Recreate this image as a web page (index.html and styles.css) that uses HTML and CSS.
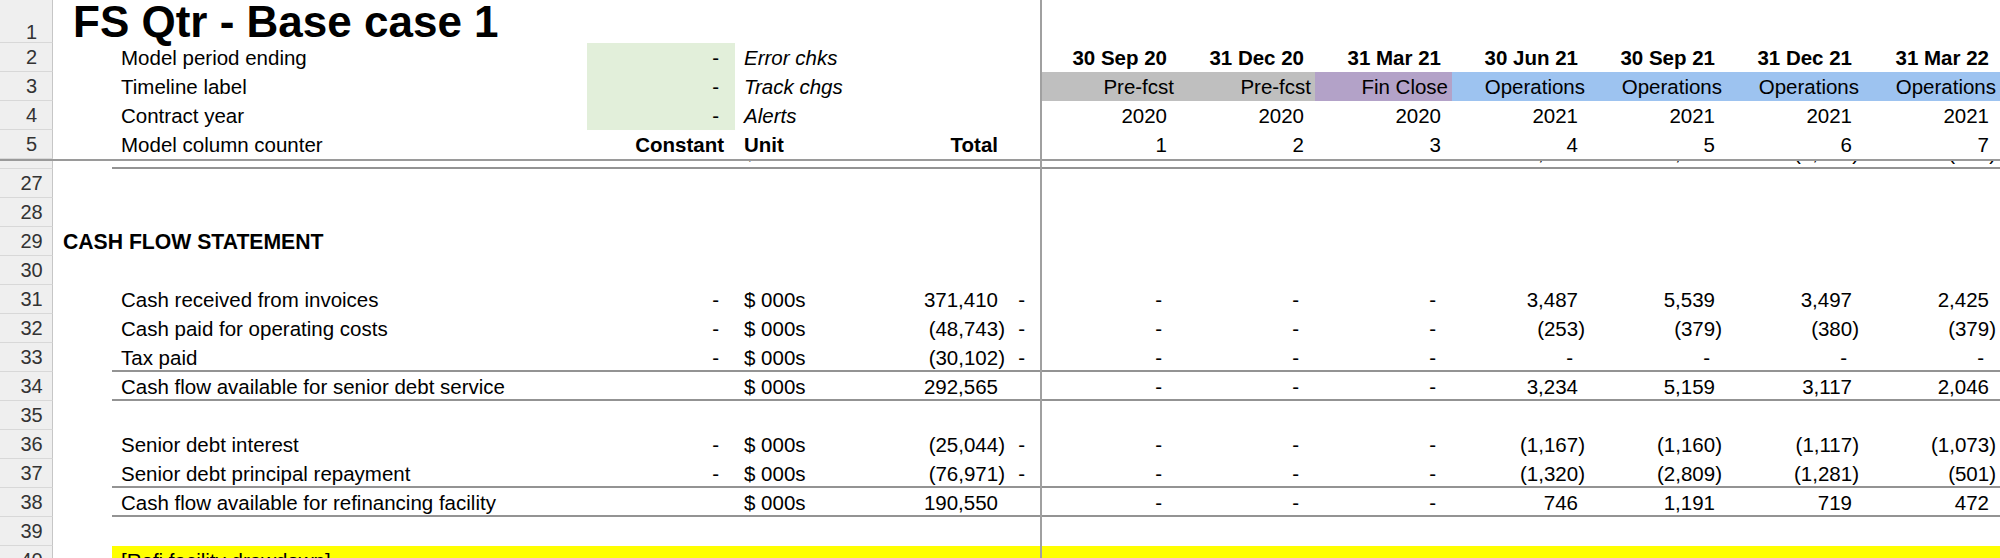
FILE: index.html
```html
<!DOCTYPE html>
<html>
<head>
<meta charset="utf-8">
<title>FS Qtr - Base case 1</title>
<link rel="stylesheet" href="styles.css">
</head>
<body>
<div class="sheet">
  <div class="pane-top">
    <div class="row row-title">
      <div class="rh rh-title">1</div>
      <div class="ind"><span class="title">FS Qtr - Base case 1</span></div>
      <div class="body"></div>
    </div>
    <div class="row">
      <div class="rh">2</div><div class="ind"></div>
      <div class="body">
        <div class="lbl">Model period ending</div>
        <div class="c dash green">-</div>
        <div class="unit it">Error chks</div>
        <div class="c"></div><div class="c"></div>
        <div class="c num b">30 Sep 20</div>
        <div class="c num b">31 Dec 20</div>
        <div class="c num b">31 Mar 21</div>
        <div class="c num b">30 Jun 21</div>
        <div class="c num b">30 Sep 21</div>
        <div class="c num b">31 Dec 21</div>
        <div class="c num b">31 Mar 22</div>
      </div>
    </div>
    <div class="row">
      <div class="rh">3</div><div class="ind"></div>
      <div class="body">
        <div class="lbl">Timeline label</div>
        <div class="c dash green">-</div>
        <div class="unit it">Track chgs</div>
        <div class="c"></div><div class="c"></div>
        <div class="c txt pre">Pre-fcst</div>
        <div class="c txt pre">Pre-fcst</div>
        <div class="c txt fin">Fin Close</div>
        <div class="c txt ops">Operations</div>
        <div class="c txt ops">Operations</div>
        <div class="c txt ops">Operations</div>
        <div class="c txt ops">Operations</div>
      </div>
    </div>
    <div class="row">
      <div class="rh">4</div><div class="ind"></div>
      <div class="body">
        <div class="lbl">Contract year</div>
        <div class="c dash green">-</div>
        <div class="unit it">Alerts</div>
        <div class="c"></div><div class="c"></div>
        <div class="c num">2020</div>
        <div class="c num">2020</div>
        <div class="c num">2020</div>
        <div class="c num">2021</div>
        <div class="c num">2021</div>
        <div class="c num">2021</div>
        <div class="c num">2021</div>
      </div>
    </div>
    <div class="row">
      <div class="rh">5</div><div class="ind"></div>
      <div class="body">
        <div class="lbl">Model column counter</div>
        <div class="c num b">Constant</div>
        <div class="unit b">Unit</div>
        <div class="c num b">Total</div>
        <div class="c"></div>
        <div class="c num">1</div>
        <div class="c num">2</div>
        <div class="c num">3</div>
        <div class="c num">4</div>
        <div class="c num">5</div>
        <div class="c num">6</div>
        <div class="c num">7</div>
      </div>
    </div>
  </div>

  <div class="pane-bottom">
    <div class="clip">
      <div class="row rule">
        <div class="rh">26</div><div class="ind"></div>
        <div class="body">
          <div class="lbl"></div>
          <div class="c"></div>
          <div class="unit">$ 000s</div>
          <div class="c"></div><div class="c"></div>
          <div class="c"></div><div class="c"></div><div class="c"></div>
          <div class="c num">3,452</div>
          <div class="c num">5,018</div>
          <div class="c neg">(1,236)</div>
          <div class="c neg">(458)</div>
        </div>
      </div>
    </div>

    <div class="row"><div class="rh">27</div><div class="ind"></div><div class="body"></div></div>
    <div class="row"><div class="rh">28</div><div class="ind"></div><div class="body"></div></div>
    <div class="row">
      <div class="rh">29</div>
      <div class="ind"><span class="section">CASH FLOW STATEMENT</span></div>
      <div class="body"></div>
    </div>
    <div class="row"><div class="rh">30</div><div class="ind"></div><div class="body"></div></div>

    <div class="row">
      <div class="rh">31</div><div class="ind"></div>
      <div class="body">
        <div class="lbl">Cash received from invoices</div>
        <div class="c dash">-</div>
        <div class="unit">$ 000s</div>
        <div class="c num">371,410</div>
        <div class="c dash">-</div>
        <div class="c dash">-</div><div class="c dash">-</div><div class="c dash">-</div>
        <div class="c num">3,487</div>
        <div class="c num">5,539</div>
        <div class="c num">3,497</div>
        <div class="c num">2,425</div>
      </div>
    </div>
    <div class="row">
      <div class="rh">32</div><div class="ind"></div>
      <div class="body">
        <div class="lbl">Cash paid for operating costs</div>
        <div class="c dash">-</div>
        <div class="unit">$ 000s</div>
        <div class="c neg">(48,743)</div>
        <div class="c dash">-</div>
        <div class="c dash">-</div><div class="c dash">-</div><div class="c dash">-</div>
        <div class="c neg">(253)</div>
        <div class="c neg">(379)</div>
        <div class="c neg">(380)</div>
        <div class="c neg">(379)</div>
      </div>
    </div>
    <div class="row rule">
      <div class="rh">33</div><div class="ind"></div>
      <div class="body">
        <div class="lbl">Tax paid</div>
        <div class="c dash">-</div>
        <div class="unit">$ 000s</div>
        <div class="c neg">(30,102)</div>
        <div class="c dash">-</div>
        <div class="c dash">-</div><div class="c dash">-</div><div class="c dash">-</div>
        <div class="c dash">-</div><div class="c dash">-</div><div class="c dash">-</div><div class="c dash">-</div>
      </div>
    </div>
    <div class="row rule">
      <div class="rh">34</div><div class="ind"></div>
      <div class="body">
        <div class="lbl">Cash flow available for senior debt service</div>
        <div class="c"></div>
        <div class="unit">$ 000s</div>
        <div class="c num">292,565</div>
        <div class="c"></div>
        <div class="c dash">-</div><div class="c dash">-</div><div class="c dash">-</div>
        <div class="c num">3,234</div>
        <div class="c num">5,159</div>
        <div class="c num">3,117</div>
        <div class="c num">2,046</div>
      </div>
    </div>
    <div class="row"><div class="rh">35</div><div class="ind"></div><div class="body"></div></div>
    <div class="row">
      <div class="rh">36</div><div class="ind"></div>
      <div class="body">
        <div class="lbl">Senior debt interest</div>
        <div class="c dash">-</div>
        <div class="unit">$ 000s</div>
        <div class="c neg">(25,044)</div>
        <div class="c dash">-</div>
        <div class="c dash">-</div><div class="c dash">-</div><div class="c dash">-</div>
        <div class="c neg">(1,167)</div>
        <div class="c neg">(1,160)</div>
        <div class="c neg">(1,117)</div>
        <div class="c neg">(1,073)</div>
      </div>
    </div>
    <div class="row rule">
      <div class="rh">37</div><div class="ind"></div>
      <div class="body">
        <div class="lbl">Senior debt principal repayment</div>
        <div class="c dash">-</div>
        <div class="unit">$ 000s</div>
        <div class="c neg">(76,971)</div>
        <div class="c dash">-</div>
        <div class="c dash">-</div><div class="c dash">-</div><div class="c dash">-</div>
        <div class="c neg">(1,320)</div>
        <div class="c neg">(2,809)</div>
        <div class="c neg">(1,281)</div>
        <div class="c neg">(501)</div>
      </div>
    </div>
    <div class="row rule">
      <div class="rh">38</div><div class="ind"></div>
      <div class="body">
        <div class="lbl">Cash flow available for refinancing facility</div>
        <div class="c"></div>
        <div class="unit">$ 000s</div>
        <div class="c num">190,550</div>
        <div class="c"></div>
        <div class="c dash">-</div><div class="c dash">-</div><div class="c dash">-</div>
        <div class="c num">746</div>
        <div class="c num">1,191</div>
        <div class="c num">719</div>
        <div class="c num">472</div>
      </div>
    </div>
    <div class="row"><div class="rh">39</div><div class="ind"></div><div class="body"></div></div>
    <div class="row">
      <div class="rh">40</div><div class="ind"></div>
      <div class="body yellow">
        <div class="lbl">[Refi facility drawdown]</div>
      </div>
    </div>
  </div>

  <div class="vfreeze"></div>
</div>
</body>
</html>
```

FILE: styles.css
```css
html, body {
  margin: 0;
  padding: 0;
  overflow: hidden;
  background: #ffffff;
}

body {
  width: 2000px;
  height: 558px;
  font-family: "Liberation Sans", Arial, sans-serif;
  font-size: 20.5px;
  color: #000000;
}

.sheet {
  position: relative;
  width: 2000px;
}

.pane-top {
  border-bottom: 2px solid #9a9a9a;
}

.row {
  display: grid;
  grid-template-columns: 53px 59px 1888px;
  height: 29px;
  line-height: 29px;
}

.row-title {
  height: 43px;
}

.rh {
  box-sizing: border-box;
  background: #efefef;
  border-right: 1px solid #c6c6c6;
  border-bottom: 1px solid #d8d8d8;
  color: #333333;
  font-size: 20px;
  text-align: center;
  padding-left: 11px;
  overflow: hidden;
}

.rh-title {
  padding-top: 18px;
}

.ind {
  white-space: nowrap;
}

.title {
  display: block;
  padding-left: 20px;
  font-size: 44px;
  font-weight: bold;
  line-height: 43px;
}

.section {
  display: block;
  padding-left: 10px;
  font-size: 21.2px;
  font-weight: bold;
}

.body {
  display: grid;
  grid-template-columns: 475px 148px 135px 139px 32px repeat(7, 137px);
  white-space: nowrap;
}

.rule .body {
  box-shadow: inset 0 -2px 0 #939393;
}

.yellow {
  background: #ffff00;
}

.lbl {
  padding-left: 9px;
}

.unit {
  padding-left: 9px;
}

.c {
  padding: 0 4px;
}

.num {
  text-align: right;
  padding-right: 11px;
}

.neg {
  text-align: right;
  padding-right: 4px;
}

.dash {
  text-align: right;
  padding-right: 16px;
}

.txt {
  text-align: right;
  padding-right: 4px;
}

.b {
  font-weight: bold;
}

.it {
  font-style: italic;
}

.green {
  background: #e2efda;
}

.pre {
  background: #bfbfbf;
}

.fin {
  background: #b3a2c8;
}

.ops {
  background: #9dc3f0;
}

.clip {
  height: 8px;
  overflow: hidden;
}

.clip .row {
  margin-top: -21px;
}

.clip .body {
  line-height: 25px;
}

.clip .rh {
  line-height: 28px;
}

.vfreeze {
  position: absolute;
  left: 1040px;
  top: 0;
  width: 2px;
  height: 558px;
  background: #a0a0a0;
}
```
